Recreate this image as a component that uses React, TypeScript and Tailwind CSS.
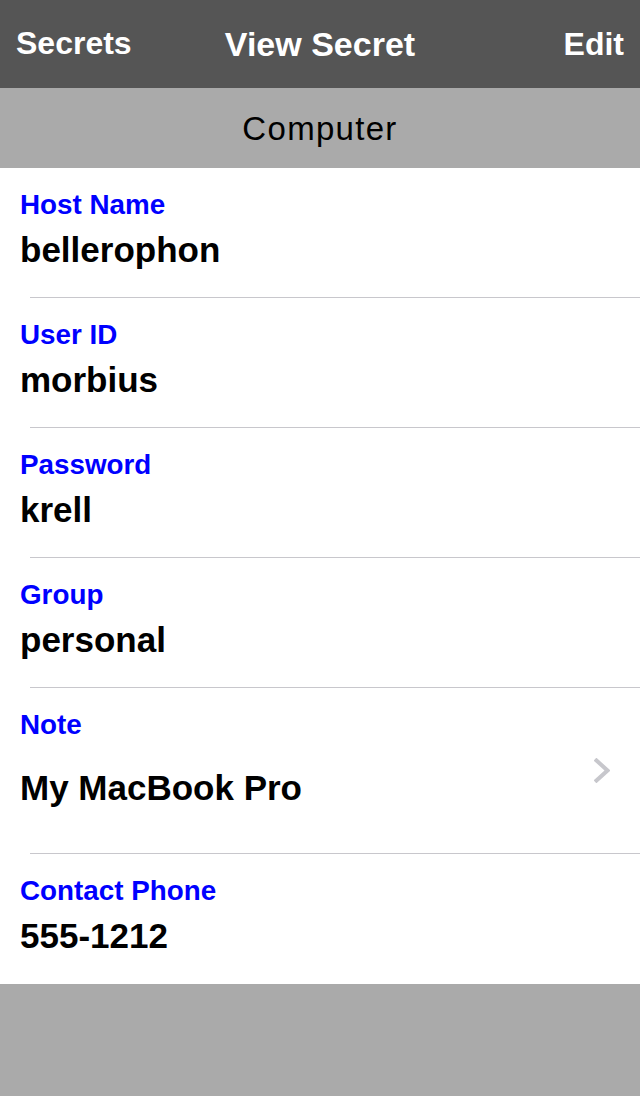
import React from "react";

interface Field {
  label: string;
  value: string;
  detail?: boolean;
}

const fields: Field[] = [
  { label: "Host Name", value: "bellerophon" },
  { label: "User ID", value: "morbius" },
  { label: "Password", value: "krell" },
  { label: "Group", value: "personal" },
  { label: "Note", value: "My MacBook Pro", detail: true },
  { label: "Contact Phone", value: "555-1212" },
];

function Chevron() {
  return (
    <svg width="16" height="25" viewBox="0 0 16 25" fill="none">
      <path
        d="M2.5 2.5 L13.5 12.5 L2.5 22.5"
        stroke="#c7c7cc"
        strokeWidth="4"
        strokeLinecap="square"
      />
    </svg>
  );
}

function FieldRow({ field, last }: { field: Field; last: boolean }) {
  return (
    <div>
      <div className="flex items-center pr-[30px]">
        <div className="flex-1 pl-5 pt-[21px] pb-[27px]">
          <div className="text-[27.8px] leading-[32px] font-bold text-[#0000ff]">
            {field.label}
          </div>
          <div
            className={
              "mt-[9px] text-[35px] leading-[40px] font-bold text-black" +
              (field.detail ? " py-[18px]" : "")
            }
          >
            {field.value}
          </div>
        </div>
        {field.detail && <Chevron />}
      </div>
      {last ? (
        <div className="h-px bg-white" />
      ) : (
        <div className="ml-[30px] h-px bg-[#c8c7cc]" />
      )}
    </div>
  );
}

export default function App() {
  return (
    <div
      className="flex h-[1096px] w-[640px] flex-col bg-[#aaaaaa]"
      style={{ fontFamily: '"Liberation Sans", Arial, sans-serif' }}
    >
      <div className="flex h-[88px] items-center bg-[#555555] px-4 text-white">
        <div className="flex-1">
          <span className="text-[32px] leading-[32px] font-bold">Secrets</span>
        </div>
        <span className="text-[34px] leading-[34px] font-bold">View Secret</span>
        <div className="flex flex-1 justify-end">
          <span className="text-[32px] leading-[32px] font-bold">Edit</span>
        </div>
      </div>
      <div className="flex h-[80px] items-center justify-center bg-[#aaaaaa]">
        <span className="text-[33px] leading-[33px] tracking-[1.3px] text-black">
          Computer
        </span>
      </div>
      <div className="bg-white">
        {fields.map((f, i) => (
          <FieldRow key={f.label} field={f} last={i === fields.length - 1} />
        ))}
      </div>
      <div className="flex-1 bg-[#aaaaaa]" />
    </div>
  );
}
